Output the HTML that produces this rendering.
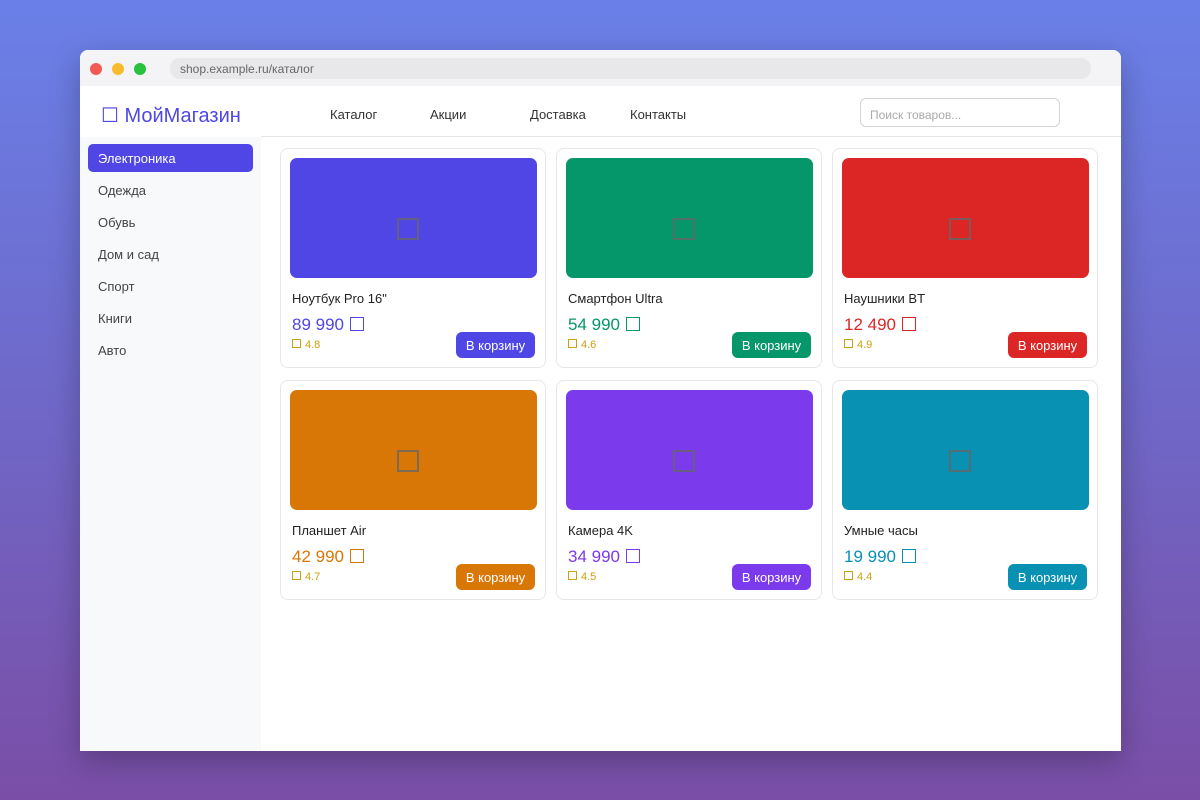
<!DOCTYPE html>
<html><head><meta charset="utf-8"><style>
*{box-sizing:border-box;margin:0;padding:0}
body{width:1200px;height:800px;background:linear-gradient(180deg,#6a80e8 0%,#6f68c8 50%,#7a4ea6 100%);font-family:"Liberation Sans",sans-serif;position:relative;overflow:hidden}
.win{position:absolute;left:80px;top:50px;width:1041px;height:701px;background:#fff;border-radius:8px 8px 0 0;overflow:hidden;box-shadow:0 10px 30px rgba(0,0,0,.25)}
.tb{height:36px;background:#f4f4f6;position:relative}
.dot{position:absolute;top:13px;width:12px;height:12px;border-radius:50%}
.url{position:absolute;left:90px;top:8px;width:921px;height:21px;background:#e8e8ea;border-radius:10px;font-size:12px;color:#666;line-height:23px;padding-left:10px}
.hdr{position:absolute;top:36px;left:0;width:1041px;height:51px}
.hdr .line{position:absolute;left:181px;right:0;bottom:0;height:1px;background:#e5e5e8}
.logo{position:absolute;left:21px;top:17px;font-size:20px;color:#4f46e5}
.nav{position:absolute;top:21px;font-size:13px;color:#333}
.search{position:absolute;left:780px;top:12px;width:200px;height:29px;border:1px solid #d4d4d8;border-radius:6px;font-size:12px;color:#aaa;padding:9px 9px}
.side{position:absolute;left:0;top:87px;width:181px;height:614px;background:#f8f9fb}
.si{position:absolute;left:8px;width:165px;height:28px;font-size:13px;color:#444;padding:7px 10px;border-radius:5px}
.si.a{background:#4f46e5;color:#fff}
.card{position:absolute;width:266px;height:220px;border:1px solid #e5e7eb;border-radius:8px;background:#fff}
.img{position:absolute;left:9px;top:9px;width:247px;height:120px;border-radius:7px}
.img i{position:absolute;left:107px;top:60px;width:22px;height:22px;border:2px solid #666;opacity:.8}
.t{position:absolute;left:11px;top:142px;font-size:13px;color:#222}
.p{position:absolute;left:11px;top:166px;font-size:17px}
.p b{display:inline-block;width:14px;height:14px;border:1.5px solid currentColor;margin-left:6px;vertical-align:-1px}
.r{position:absolute;left:11px;top:190px;font-size:11px;color:#c9a20c}
.r b{display:inline-block;width:9px;height:9px;border:1px solid #c9a20c;margin-right:4px}
.btn{position:absolute;left:175px;top:183px;width:79px;height:26px;border-radius:6px;color:#fff;font-size:13px;text-align:center;line-height:28px}
</style></head><body>
<div class="win">
<div class="tb"><div class="dot" style="left:10px;background:#f25a56"></div><div class="dot" style="left:32px;background:#f7bb2e"></div><div class="dot" style="left:54px;background:#29c23f"></div><div class="url">shop.example.ru/каталог</div></div>
<div class="hdr"><div class="logo">☐ МойМагазин</div>
<div class="nav" style="left:250px">Каталог</div><div class="nav" style="left:350px">Акции</div><div class="nav" style="left:450px">Доставка</div><div class="nav" style="left:550px">Контакты</div>
<div class="search">Поиск товаров...</div><div class="line"></div></div>
<div class="side">
<div class="si a" style="top:7px">Электроника</div>
<div class="si" style="top:39px">Одежда</div>
<div class="si" style="top:71px">Обувь</div>
<div class="si" style="top:103px">Дом и сад</div>
<div class="si" style="top:135px">Спорт</div>
<div class="si" style="top:167px">Книги</div>
<div class="si" style="top:199px">Авто</div>
</div>
<div class="card" style="left:200px;top:98px"><div class="img" style="background:#4f46e5"><i></i></div><div class="t">Ноутбук Pro 16"</div><div class="p" style="color:#4f46e5">89 990<b></b></div><div class="r"><b></b>4.8</div><div class="btn" style="background:#4f46e5">В корзину</div></div>
<div class="card" style="left:476px;top:98px"><div class="img" style="background:#059669"><i></i></div><div class="t">Смартфон Ultra</div><div class="p" style="color:#059669">54 990<b></b></div><div class="r"><b></b>4.6</div><div class="btn" style="background:#059669">В корзину</div></div>
<div class="card" style="left:752px;top:98px"><div class="img" style="background:#dc2626"><i></i></div><div class="t">Наушники BT</div><div class="p" style="color:#dc2626">12 490<b></b></div><div class="r"><b></b>4.9</div><div class="btn" style="background:#dc2626">В корзину</div></div>
<div class="card" style="left:200px;top:330px"><div class="img" style="background:#d97706"><i></i></div><div class="t">Планшет Air</div><div class="p" style="color:#d97706">42 990<b></b></div><div class="r"><b></b>4.7</div><div class="btn" style="background:#d97706">В корзину</div></div>
<div class="card" style="left:476px;top:330px"><div class="img" style="background:#7c3aed"><i></i></div><div class="t">Камера 4K</div><div class="p" style="color:#7c3aed">34 990<b></b></div><div class="r"><b></b>4.5</div><div class="btn" style="background:#7c3aed">В корзину</div></div>
<div class="card" style="left:752px;top:330px"><div class="img" style="background:#0891b2"><i></i></div><div class="t">Умные часы</div><div class="p" style="color:#0891b2">19 990<b></b></div><div class="r"><b></b>4.4</div><div class="btn" style="background:#0891b2">В корзину</div></div>
</div>
</body></html>
